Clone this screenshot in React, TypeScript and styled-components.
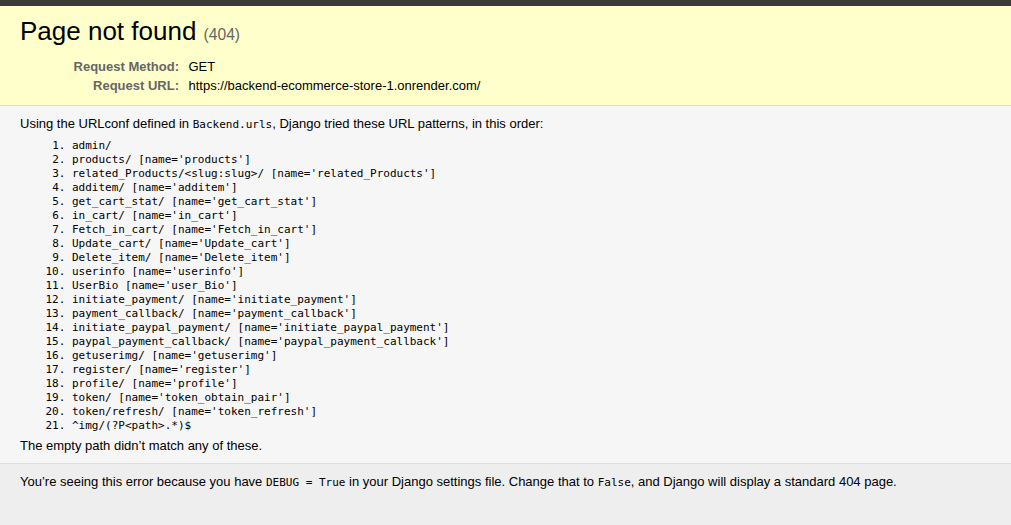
import React from "react";
import styled, { createGlobalStyle } from "styled-components";

const GlobalStyle = createGlobalStyle`
  html, body {
    margin: 0;
    padding: 0;
    background: #eee;
  }
  body {
    font-family: "Liberation Sans", Arial, sans-serif;
    font-size: 13px;
    color: #000;
  }
`;

const TopBar = styled.div`
  height: 6px;
  background: #3c3b3c;
`;

const Section = styled.div<{ $tone: "summary" | "info" | "explanation" }>`
  padding: 10px 20px;
  background: ${(p) =>
    p.$tone === "summary" ? "#ffc" : p.$tone === "info" ? "#f6f6f6" : "#eee"};
  border-bottom: ${(p) => (p.$tone === "explanation" ? "0 none" : "1px solid #ddd")};
`;

const Title = styled.h1`
  margin: 0 0 7px;
  padding: 0;
  font-size: 26px;
  line-height: 30px;
  font-weight: normal;
`;

const Status = styled.span`
  font-size: 60%;
  color: #666;
  font-weight: normal;
`;

const MetaTable = styled.table`
  border: none;
  border-collapse: collapse;
  width: 100%;
`;

const MetaHead = styled.th`
  vertical-align: top;
  width: 156px;
  text-align: right;
  color: #666;
  font-weight: bold;
  padding: 2px 6.5px 2px 3px;
  line-height: 15px;
`;

const MetaValue = styled.td`
  vertical-align: top;
  padding: 2px 3px;
  line-height: 15px;
`;

const Text = styled.p`
  margin: 0;
  line-height: 15px;
`;

const Code = styled.code`
  font-family: "DejaVu Sans Mono", "Liberation Mono", monospace;
  font-size: 11px;
`;

const PatternList = styled.ol`
  margin: 6.5px 52px 5.5px;
  padding: 0;
`;

const Pattern = styled.li`
  font-family: "DejaVu Sans Mono", "Liberation Mono", monospace;
  font-size: 11px;
  line-height: 14px;
`;

const patterns = [
  "admin/",
  "products/ [name='products']",
  "related_Products/<slug:slug>/ [name='related_Products']",
  "additem/ [name='additem']",
  "get_cart_stat/ [name='get_cart_stat']",
  "in_cart/ [name='in_cart']",
  "Fetch_in_cart/ [name='Fetch_in_cart']",
  "Update_cart/ [name='Update_cart']",
  "Delete_item/ [name='Delete_item']",
  "userinfo [name='userinfo']",
  "UserBio [name='user_Bio']",
  "initiate_payment/ [name='initiate_payment']",
  "payment_callback/ [name='payment_callback']",
  "initiate_paypal_payment/ [name='initiate_paypal_payment']",
  "paypal_payment_callback/ [name='paypal_payment_callback']",
  "getuserimg/ [name='getuserimg']",
  "register/ [name='register']",
  "profile/ [name='profile']",
  "token/ [name='token_obtain_pair']",
  "token/refresh/ [name='token_refresh']",
  "^img/(?P<path>.*)$",
];

export default function App() {
  return (
    <>
      <GlobalStyle />
      <TopBar />
      <Section $tone="summary">
        <Title>
          Page not found <Status>(404)</Status>
        </Title>
        <MetaTable>
          <tbody>
            <tr>
              <MetaHead>Request Method:</MetaHead>
              <MetaValue>GET</MetaValue>
            </tr>
            <tr>
              <MetaHead>Request URL:</MetaHead>
              <MetaValue>https://backend-ecommerce-store-1.onrender.com/</MetaValue>
            </tr>
          </tbody>
        </MetaTable>
      </Section>
      <Section $tone="info">
        <Text>
          Using the URLconf defined in <Code>Backend.urls</Code>, Django tried these URL
          patterns, in this order:
        </Text>
        <PatternList>
          {patterns.map((p) => (
            <Pattern key={p}>{p}</Pattern>
          ))}
        </PatternList>
        <Text>The empty path didn’t match any of these.</Text>
      </Section>
      <Section $tone="explanation">
        <Text>
          You’re seeing this error because you have <Code>DEBUG = True</Code> in your
          Django settings file. Change that to <Code>False</Code>, and Django will display a
          standard 404 page.
        </Text>
      </Section>
    </>
  );
}
